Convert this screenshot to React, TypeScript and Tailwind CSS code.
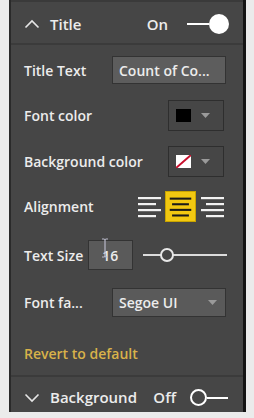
import React from "react";

const font = { fontFamily: '"Open Sans", "Noto Sans", sans-serif' };

function Chevron({ up }: { up?: boolean }) {
  return (
    <svg width="16" height="10" viewBox="0 0 16 10" className="shrink-0">
      <polyline
        points={up ? "1.5,8.5 8,2 14.5,8.5" : "1.5,1.5 8,8 14.5,1.5"}
        fill="none"
        stroke="#e6e6e6"
        strokeWidth="1.6"
      />
    </svg>
  );
}

function Caret() {
  return (
    <svg width="9" height="5" viewBox="0 0 9 5">
      <polygon points="0,0 9,0 4.5,5" fill="#9a9a9a" />
    </svg>
  );
}

function AlignIcon({ kind, active }: { kind: "l" | "c" | "r"; active?: boolean }) {
  const long = 23;
  const short = 18;
  const ys = [7, 13, 19, 25];
  const color = active ? "#1a1a1a" : "#f2f2f2";
  const x = (w: number) => (kind === "l" ? 4 : kind === "r" ? 27 - w : (31 - w) / 2);
  return (
    <div
      className={
        active
          ? "w-[31px] h-[31px] bg-[#f2c811] border border-[#c9a400] flex items-center justify-center"
          : "w-[31px] h-[31px] flex items-center justify-center"
      }
    >
      <svg width="31" height="31" viewBox="0 0 31 31">
        {ys.map((y, i) => {
          const w = i % 2 === 0 ? long : short;
          return <rect key={i} x={x(w)} y={y - 1} width={w} height="2.2" fill={color} />;
        })}
      </svg>
    </div>
  );
}

export default function App() {
  return (
    <div className="w-[254px] h-[418px] bg-[#ebebeb] overflow-hidden" style={font}>
      <div className="ml-[9px] w-[237px] h-[412px] border-l-2 border-l-[#2a2a2a] border-r-[3px] border-r-[#141414] bg-[#464646] flex">
        <div className="flex-1 flex flex-col text-[#ececec]">
          <div className="h-[2px] bg-[#3a3a3a]" />
          {/* Title header */}
          <div className="h-[41px] pt-[3px] flex items-center pl-[13px] pr-[14px]">
            <Chevron up />
            <span className="ml-[10px] text-[15px] font-semibold">Title</span>
            <span className="ml-auto text-[15px] font-semibold">On</span>
            <div className="ml-[19px] flex items-center">
              <div className="w-[22px] h-[2px] bg-white" />
              <div className="w-[20px] h-[20px] rounded-full bg-white" />
            </div>
          </div>
          <div className="h-[2px] bg-[#3b3b3b]" />

          {/* Title Text */}
          <div className="mt-[11px] h-[28px] flex items-center pl-[13px] pr-[17px]">
            <span className="text-[14px] font-semibold">Title Text</span>
            <div className="ml-auto w-[114px] h-[28px] bg-[#5d5d5d] border border-[#333] flex items-center pl-[6px] text-[14px] font-semibold whitespace-nowrap overflow-hidden">
              Count of Co...
            </div>
          </div>

          {/* Font color */}
          <div className="mt-[16px] h-[31px] flex items-center pl-[13px] pr-[19px]">
            <span className="text-[14px] font-semibold">Font color</span>
            <div className="ml-auto w-[56px] h-[31px] border border-[#2e2e2e] flex items-center pl-[7px] gap-[10px]">
              <div className="w-[15px] h-[13px] bg-black" />
              <Caret />
            </div>
          </div>

          {/* Background color */}
          <div className="mt-[15px] h-[31px] flex items-center pl-[13px] pr-[19px]">
            <span className="text-[14px] font-semibold">Background color</span>
            <div className="ml-auto w-[56px] h-[31px] border border-[#2e2e2e] flex items-center pl-[7px] gap-[10px]">
              <svg width="15" height="13" viewBox="0 0 15 13">
                <rect width="15" height="13" fill="#fff" />
                <line x1="0" y1="13" x2="15" y2="0" stroke="#c8102e" strokeWidth="2" />
              </svg>
              <Caret />
            </div>
          </div>

          {/* Alignment */}
          <div className="mt-[14px] h-[31px] flex items-center pl-[13px] pr-[15px]">
            <span className="text-[14px] font-semibold">Alignment</span>
            <div className="ml-auto flex items-center gap-[4px]">
              <div className="-mr-[4px]"><AlignIcon kind="l" /></div>
              <AlignIcon kind="c" active />
              <div className="-ml-[3px]"><AlignIcon kind="r" /></div>
            </div>
          </div>

          {/* Text Size */}
          <div className="mt-[18px] h-[30px] flex items-center pl-[13px]">
            <span className="text-[14px] font-semibold">Text Size</span>
            <div className="relative ml-[5px] w-[45px] h-[30px] bg-[#5a5a5a] border border-[#333] flex items-center pl-[13px] text-[14px] font-semibold">
              16
              <svg className="absolute left-[12px] -top-[3px]" width="8" height="20" viewBox="0 0 8 20">
                <path d="M1 1 H3 Q4 1 4 3 V17 Q4 19 3 19 H1 M7 1 H5 Q4 1 4 3 M4 17 Q4 19 5 19 H7" fill="none" stroke="#b8b8c8" strokeWidth="1.2" />
              </svg>
            </div>
            <div className="ml-[10px] w-[84px] h-[16px] relative flex items-center">
              <div className="w-full h-[2px] bg-[#dcdcdc]" />
              <div className="absolute left-[17px] top-[1px] w-[14px] h-[14px] rounded-full border-2 border-[#e8e8e8] bg-[#464646]" />
            </div>
          </div>

          {/* Font family */}
          <div className="mt-[18px] h-[29px] flex items-center pl-[13px] pr-[17px]">
            <span className="text-[14px] font-semibold">Font fa...</span>
            <div className="ml-auto w-[114px] h-[29px] bg-[#5a5a5a] border border-[#333] flex items-center pl-[6px] pr-[8px] text-[14px] font-semibold">
              Segoe UI
              <span className="ml-auto"><Caret /></span>
            </div>
          </div>

          {/* Revert */}
          <div className="mt-[26px] h-[20px] flex items-center pl-[13px]">
            <span className="text-[14px] font-semibold text-[#d8b24a]">Revert to default</span>
          </div>

          <div className="mt-[12px] h-[2px] bg-[#3b3b3b]" />

          {/* Background header */}
          <div className="flex-1 pt-[6px] flex items-center pl-[13px] pr-[12px]">
            <Chevron />
            <span className="ml-[10px] text-[15px] font-semibold">Background</span>
            <span className="ml-auto text-[15px] font-semibold">Off</span>
            <div className="ml-[14px] flex items-center mr-[3px]">
              <div className="w-[17px] h-[17px] rounded-full border-2 border-white" />
              <div className="w-[21px] h-[2px] bg-white" />
            </div>
          </div>
        </div>
      </div>
    </div>
  );
}
